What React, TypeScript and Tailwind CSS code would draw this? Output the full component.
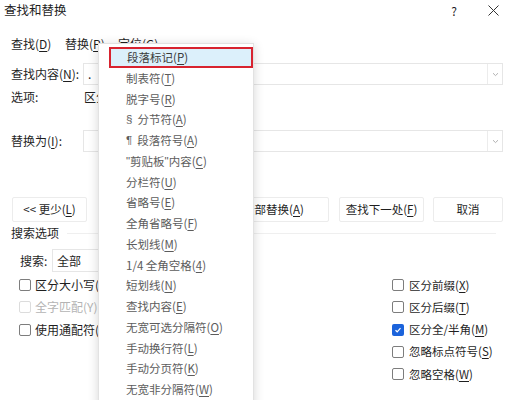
import React from "react";

const font = { fontFamily: '"Noto Sans CJK SC", "Noto Sans", sans-serif' };

function Key({ k }: { k: string }) {
	return (
		<>
			(<span className="underline underline-offset-2">{k}</span>)
		</>
	);
}

function Latin({ children, gap }: { children: React.ReactNode; gap?: boolean }) {
	return (
		<span className={gap ? "mr-[5px]" : ""} style={{ fontFamily: '"Liberation Sans", sans-serif' }}>
			{children}
		</span>
	);
}

function Check({ checked, disabled }: { checked?: boolean; disabled?: boolean }) {
	if (checked) {
		return (
			<span className="w-[12px] h-[12px] rounded-[2px] bg-[#1b63db] flex items-center justify-center shrink-0">
				<svg width="8" height="8" viewBox="0 0 8 8">
					<path d="M1.5 4.2 L3.2 5.8 L6.5 2.2" fill="none" stroke="white" strokeWidth="1.2" />
				</svg>
			</span>
		);
	}
	return (
		<span
			className={
				disabled
					? "w-[12px] h-[12px] rounded-[2px] border border-[#dcdcdc] shrink-0"
					: "w-[12px] h-[12px] rounded-[2px] border border-[#7d7d7d] shrink-0"
			}
		/>
	);
}

function Chevron() {
	return (
		<div className="w-[15px] h-full border-l border-[#ececec] flex items-center justify-center">
			<svg width="7" height="5" viewBox="0 0 7 5">
				<path d="M1 1.2 L3.5 3.6 L6 1.2" fill="none" stroke="#a8a8a8" strokeWidth="0.9" />
			</svg>
		</div>
	);
}

const menuItems: [React.ReactNode, string][] = [
	["制表符", "T"],
	["脱字号", "R"],
	[<><Latin gap>§</Latin>分节符</>, "A"],
	[<><Latin gap>¶</Latin>段落符号</>, "A"],
	[<><Latin>"</Latin>剪贴板<Latin>"</Latin>内容</>, "C"],
	["分栏符", "U"],
	["省略号", "E"],
	["全角省略号", "F"],
	["长划线", "M"],
	["1/4 全角空格", "4"],
	["短划线", "N"],
	["查找内容", "E"],
	["无宽可选分隔符", "O"],
	["手动换行符", "L"],
	["手动分页符", "K"],
	["无宽非分隔符", "W"],
];

const rightChecks: [string, string, boolean][] = [
	["区分前缀", "X", false],
	["区分后缀", "T", false],
	["区分全/半角", "M", true],
	["忽略标点符号", "S", false],
	["忽略空格", "W", false],
];

export default function App() {
	return (
		<div className="w-[512px] h-[400px] bg-white relative overflow-hidden text-[12px] text-[#1f1f1f]" style={font}>
			{/* title bar */}
			<div className="h-[21px] flex items-center pl-[4px]">
				<span className="text-[12.5px]">查找和替换</span>
				<span className="ml-auto mr-[31px] text-[12px]">?</span>
				<svg width="11" height="11" viewBox="0 0 11 11" className="mr-[13px]">
					<path d="M0.5 0.5 L10.5 10.5 M10.5 0.5 L0.5 10.5" stroke="#333" strokeWidth="1" />
				</svg>
			</div>

			{/* tabs */}
			<div className="h-[22px] mt-[12px] flex items-center pl-[11px]">
				<span className="w-[54px]">
					查找<Key k="D" />
				</span>
				<span className="w-[53px]">
					替换<Key k="P" />
				</span>
				<span>
					定位<Key k="G" />
				</span>
			</div>

			{/* find */}
			<div className="h-[22px] mt-[8px] flex items-center pl-[11px] pr-[9px]">
				<span className="w-[72px]">
					查找内容<Key k="N" />:
				</span>
				<div className="flex-1 h-full border border-[#e6e6e6] flex items-center">
					<span className="pl-[4px] flex-1">.</span>
					<Chevron />
				</div>
			</div>

			{/* options */}
			<div className="h-[24px] flex items-center pl-[11px]">
				<span className="w-[73px]">选项:</span>
				<span>区分全/半角</span>
			</div>

			{/* replace */}
			<div className="h-[22px] mt-[21px] flex items-center pl-[11px] pr-[9px]">
				<span className="w-[72px]">
					替换为<Key k="I" />:
				</span>
				<div className="flex-1 h-full border border-[#e6e6e6] flex items-center justify-end">
					<Chevron />
				</div>
			</div>

			{/* buttons */}
			<div className="h-[25px] mt-[45px] flex items-stretch pl-[12px] text-[11.5px]">
				<div className="w-[75px] border border-[#ececec] rounded-[2px] flex items-center justify-center">
					&lt;&lt; 更少<Key k="L" />
				</div>
				<div className="ml-[131px] w-[111px] border border-[#ececec] rounded-[2px] flex items-center justify-center">
					全部替换<Key k="A" />
				</div>
				<div className="ml-[10px] w-[85px] border border-[#ececec] rounded-[2px] flex items-center justify-center">
					查找下一处<Key k="F" />
				</div>
				<div className="ml-[9px] w-[70px] border border-[#ececec] rounded-[2px] flex items-center justify-center">
					取消
				</div>
			</div>

			{/* search options heading */}
			<div className="h-[22px] flex items-center pl-[11px] pr-[16px]">
				<span>搜索选项</span>
				<div className="flex-1 h-px bg-[#efefef] ml-[8px]" />
			</div>

			{/* search select */}
			<div className="h-[23px] mt-[5px] flex items-center pl-[20px]">
				<span className="w-[32px]">搜索:</span>
				<div className="w-[110px] h-full border border-[#e6e6e6] flex items-center pl-[4px]">全部</div>
			</div>

			{/* checkboxes */}
			<div className="mt-[2px] flex">
				<div className="w-[392px] pl-[19px] flex flex-col">
					<div className="h-[22.3px] flex items-center gap-[4px]">
						<Check />
						<span>
							区分大小写<Key k="H" />
						</span>
					</div>
					<div className="h-[22.3px] flex items-center gap-[4px]">
						<Check disabled />
						<span className="text-[#b4b4b4]">全字匹配(Y)</span>
					</div>
					<div className="h-[22.3px] flex items-center gap-[4px]">
						<Check />
						<span>
							使用通配符<Key k="U" />
						</span>
					</div>
				</div>
				<div className="flex flex-col text-[11.5px]">
					{rightChecks.map(([label, k, on]) => (
						<div key={label} className="h-[22.3px] flex items-center gap-[5px]">
							<Check checked={on} />
							<span>
								{label}
								<Key k={k} />
							</span>
						</div>
					))}
				</div>
			</div>

			{/* special characters menu */}
			<div className="absolute left-[98px] top-[43px] w-[156px] h-[380px] bg-white border border-[#e2e2e2] shadow-[0_2px_10px_rgba(0,0,0,0.16)] pt-[3px] text-[11.5px] text-[#5c5c5c]">
				<div className="ml-[10px] h-[21px] border-2 border-[#d8232f] bg-[#dcf0fb] flex items-center pl-[16px] text-[#3a3a3a]">
					段落标记<Key k="P" />
				</div>
				{menuItems.map(([label, k], i) => (
					<div key={i} className="h-[20.75px] flex items-center pl-[27px]">
						{label}
						<Key k={k} />
					</div>
				))}
			</div>
		</div>
	);
}
